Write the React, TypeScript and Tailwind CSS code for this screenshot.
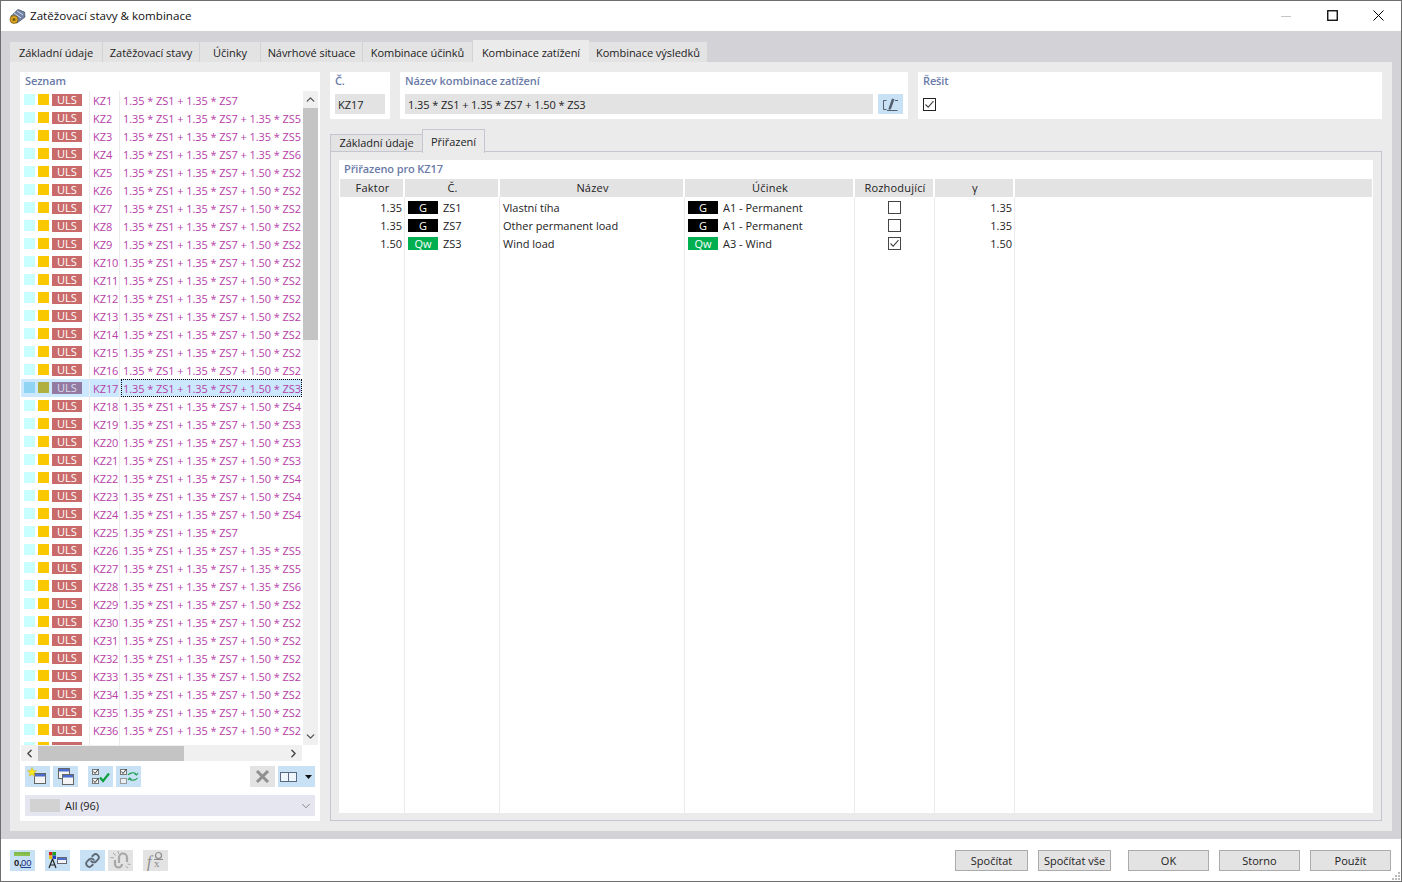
import React from 'react';
import { ChevronUp, ChevronDown, ChevronLeft, ChevronRight, Link } from 'lucide-react';

const FONT = "font-['Open_Sans','Noto_Sans',sans-serif]";

const suffixes = [
  '', ' + 1.35 * ZS5', ' + 1.35 * ZS5', ' + 1.35 * ZS6', ' + 1.50 * ZS2', ' + 1.50 * ZS2', ' + 1.50 * ZS2', ' + 1.50 * ZS2', ' + 1.50 * ZS2',
  ' + 1.50 * ZS2', ' + 1.50 * ZS2', ' + 1.50 * ZS2', ' + 1.50 * ZS2', ' + 1.50 * ZS2', ' + 1.50 * ZS2', ' + 1.50 * ZS2', ' + 1.50 * ZS3',
  ' + 1.50 * ZS4', ' + 1.50 * ZS3', ' + 1.50 * ZS3', ' + 1.50 * ZS3', ' + 1.50 * ZS4', ' + 1.50 * ZS4', ' + 1.50 * ZS4', '',
  ' + 1.35 * ZS5', ' + 1.35 * ZS5', ' + 1.35 * ZS6', ' + 1.50 * ZS2', ' + 1.50 * ZS2', ' + 1.50 * ZS2', ' + 1.50 * ZS2', ' + 1.50 * ZS2',
  ' + 1.50 * ZS2', ' + 1.50 * ZS2', ' + 1.50 * ZS2',
];

const topTabs = [
  { label: 'Základní údaje', w: 'w-[93px]' },
  { label: 'Zatěžovací stavy', w: 'w-[97px]' },
  { label: 'Účinky', w: 'w-[61px]' },
  { label: 'Návrhové situace', w: 'w-[102px]' },
  { label: 'Kombinace účinků', w: 'w-[110px]' },
  { label: 'Kombinace zatížení', w: 'w-[116px]', active: true },
  { label: 'Kombinace výsledků', w: 'w-[119px]' },
];

const rows = [
  { f: '1.35', tag: 'G', zs: 'ZS1', name: 'Vlastní tíha', eff: 'A1 - Permanent', dec: false, g: '1.35' },
  { f: '1.35', tag: 'G', zs: 'ZS7', name: 'Other permanent load', eff: 'A1 - Permanent', dec: false, g: '1.35' },
  { f: '1.50', tag: 'Qw', zs: 'ZS3', name: 'Wind load', eff: 'A3 - Wind', dec: true, g: '1.50' },
];

const cols = ['w-[65px]', 'w-[95px]', 'w-[185px]', 'w-[170px]', 'w-[80px]', 'w-[80px]'];

const Tag = ({ t }: { t: string }) => (
  <span className={`w-[30px] h-[13px] -mt-[3px] flex items-center justify-center text-[11px] leading-none text-white ${t === 'G' ? 'bg-black' : 'bg-[#00b050]'}`}>{t}</span>
);

const Box = ({ on, dark }: { on?: boolean; dark?: boolean }) => (
  <svg width="13" height="13" viewBox="0 0 13 13">
    <rect x="0.5" y="0.5" width="12" height="12" fill="#fff" stroke={dark ? '#222' : '#444'} />
    {on && <path d="M2.5 6.5 L5.2 9.2 L10.5 3.2" fill="none" stroke="#444" strokeWidth="1.1" />}
  </svg>
);

const IconBtn = ({ children, gray, className = '' }: { children?: React.ReactNode; gray?: boolean; className?: string }) => (
  <div className={`w-[25px] h-[21px] shrink-0 flex items-center justify-center ${gray ? 'bg-[#e3e3e3]' : 'bg-[#c8e1f5]'} ${className}`}>{children}</div>
);

const Btn = ({ label, w }: { label: string; w: string }) => (
  <div className={`${w} h-[21px] pt-[2px] border border-[#ababab] bg-[#e3e3e3] flex items-center justify-center text-[11px] text-[#222]`}>{label}</div>
);

const Win = ({ x, y, w = 12, h = 11 }: { x: number; y: number; w?: number; h?: number }) => (
  <g>
    <rect x={x + 0.5} y={y + 0.5} width={w} height={h} fill="#f4f4f4" stroke="#666" />
    <rect x={x + 1} y={y + 1} width={w - 1} height="2.5" fill="#4a6ccc" />
  </g>
);

const Ico = ({ children }: { children: React.ReactNode }) => (
  <svg width="25" height="21" viewBox="0 0 25 21">{children}</svg>
);

const Title = ({ children, className = '' }: { children: React.ReactNode; className?: string }) => (
  <div className={`h-[18px] flex items-center text-[11px] font-semibold tracking-[-0.12px] text-[#6a7ba8] whitespace-nowrap ${className}`}>{children}</div>
);

function ListRow({ i }: { i: number }) {
  const selected = i === 16;
  return (
    <div className={`h-[18px] flex items-start shrink-0 ${selected ? 'bg-[#cce8ff]' : ''}`}>
      <span className={`mt-[3px] ml-[3px] w-[11px] h-[11px] ${selected ? 'bg-[#90d4f4]' : 'bg-[#c8ffff]'}`} />
      <span className={`mt-[3px] ml-[3px] w-[11px] h-[11px] ${selected ? 'bg-[#b0b040]' : 'bg-[#f9c800]'}`} />
      <span className={`mt-[3px] ml-[3px] w-[30px] h-[12px] pb-[1px] flex items-center justify-center text-[11px] leading-none ${selected ? 'bg-[#927aa0] text-[#dde]' : 'bg-[#c96b6b] text-white'}`}>ULS</span>
      <span className="ml-[7px] w-[1px] h-[18px] bg-[#ebebeb]" />
      <span className="w-[29px] h-[18px] pt-[2px] pl-[3px] flex items-center text-[11px] tracking-[-0.08px] text-[#b640a8] whitespace-nowrap">KZ{i + 1}</span>
      <span className="w-[1px] h-[18px] bg-[#ebebeb]" />
      <span className={`pl-[2px] pt-[2px] ml-[1px] h-[18px] flex-1 flex items-center text-[11px] tracking-[-0.07px] text-[#b640a8] whitespace-pre ${selected ? 'outline-1 outline-dotted outline-offset-[-1px] outline-black' : ''}`}>
        {`1.35 * ZS1 + 1.35 * ZS7${suffixes[i]}`}
      </span>
    </div>
  );
}

export default function App() {
  return (
    <div className={`w-[1402px] h-[882px] bg-white border border-[#6e6e6e] flex flex-col overflow-hidden ${FONT}`}>
      {/* title bar */}
      <div className="h-[30px] shrink-0 flex items-center bg-white">
        <svg width="18" height="17" viewBox="0 0 18 17" className="ml-[7px]">
          <path d="M3 8 L10 1.5 L16.5 4 L17 9 L9 15 L4 13 Z" fill="#6f82a6" stroke="#3c4658" strokeWidth="0.7" />
          <path d="M6 5 L13 10 M9 3 L15 7 M4.5 7 L10 12" stroke="#d6dcea" strokeWidth="1" />
          <circle cx="6" cy="11.5" r="4" fill="#d9a520" stroke="#6e5210" strokeWidth="0.7" />
          <circle cx="6" cy="11.5" r="1.5" fill="#7a5a10" />
        </svg>
        <span className="ml-[4px] text-[11.6px] text-[#111]">Zatěžovací stavy &amp; kombinace</span>
        <div className="ml-auto flex items-center -mt-px">
          <div className="w-[46px] flex justify-center"><svg width="10" height="10" viewBox="0 0 10 10"><path d="M0 5.5 H10" stroke="#c4c4c4" /></svg></div>
          <div className="w-[46px] flex justify-center"><svg width="11" height="11" viewBox="0 0 11 11"><rect x="0.75" y="0.75" width="9.5" height="9.5" fill="none" stroke="#000" strokeWidth="1.3" /></svg></div>
          <div className="w-[46px] flex justify-center"><svg width="11" height="11" viewBox="0 0 11 11"><path d="M0.5 0.5 L10.5 10.5 M10.5 0.5 L0.5 10.5" stroke="#000" /></svg></div>
        </div>
      </div>

      {/* body */}
      <div className="h-[808px] shrink-0 bg-[#d2d2d7] px-[9px] pt-[9px] flex flex-col">
        <div className="h-[22px] flex items-end shrink-0">
          {topTabs.map(t => (
            <div key={t.label} className={`${t.w} flex items-center justify-center text-[11px] tracking-[-0.05px] text-[#222] whitespace-nowrap ${t.active ? 'h-[22px] pt-[4px] bg-[#ebebeb]' : 'h-[20px] pt-[2px] bg-[#e3e3e3] border-r border-[#d2d2d7]'}`}>{t.label}</div>
          ))}
        </div>
        <div className="h-[769px] bg-[#ebebeb] flex p-[10px] gap-[10px]">
          {/* left list */}
          <div className="w-[300px] h-[749px] bg-white flex flex-col shrink-0 px-[1px]">
            <Title className="pl-[4px]">Seznam</Title>
            <div className="h-[654px] flex mt-[1px] overflow-hidden shrink-0">
              <div className="w-[281px] flex flex-col overflow-hidden">
                {suffixes.map((_, i) => <ListRow key={i} i={i} />)}
                <div className="h-[18px] flex items-start shrink-0">
                  <span className="mt-[3px] ml-[3px] w-[11px] h-[11px] bg-[#c8ffff]" />
                  <span className="mt-[3px] ml-[3px] w-[11px] h-[11px] bg-[#f9c800]" />
                  <span className="mt-[3px] ml-[3px] w-[30px] h-[12px] bg-[#c96b6b]" />
                  <span className="ml-[7px] w-[1px] h-[18px] bg-[#ebebeb]" />
                  <span className="ml-[29px] w-[1px] h-[18px] bg-[#ebebeb]" />
                </div>
              </div>
              <div className="w-[15px] h-[654px] ml-[1px] bg-[#f0f0f0] flex flex-col items-center">
                <ChevronUp size={13} strokeWidth={2.5} className="text-[#555] my-[2px] shrink-0" />
                <div className="w-[15px] h-[232px] bg-[#c4c4c4]" />
                <div className="flex-1" />
                <ChevronDown size={13} strokeWidth={2.5} className="text-[#555] my-[2px] shrink-0" />
              </div>
            </div>
            <div className="h-[16px] w-[281px] bg-[#f0f0f0] flex items-center shrink-0">
              <div className="w-[17px] flex justify-center"><ChevronLeft size={13} strokeWidth={2.5} className="text-[#444]" /></div>
              <div className="w-[146px] h-[15px] bg-[#c4c4c4]" />
              <div className="ml-auto w-[17px] flex justify-center"><ChevronRight size={13} strokeWidth={2.5} className="text-[#444]" /></div>
            </div>
            <div className="h-[21px] mt-[5px] pl-[4px] flex items-center shrink-0">
              <IconBtn>
                <Ico>
                  <Win x={9} y={7} w={11} h={10} />
                  <path d="M7 1.5 L8.3 4.6 L11.5 4.8 L9 7 L9.8 10.2 L7 8.5 L4.2 10.2 L5 7 L2.5 4.8 L5.7 4.6 Z" fill="#f8e81c" stroke="#b8a010" strokeWidth="0.4" />
                </Ico>
              </IconBtn>
              <IconBtn className="ml-[3px]">
                <Ico>
                  <Win x={5} y={2} w={11} h={10} />
                  <Win x={9} y={8} w={11} h={10} />
                </Ico>
              </IconBtn>
              <IconBtn className="ml-[10px]">
                <Ico>
                  <rect x="4.5" y="3.5" width="6" height="5" fill="#f4f4f4" stroke="#777" />
                  <rect x="4.5" y="12.5" width="6" height="5" fill="#f4f4f4" stroke="#777" />
                  <path d="M5.5 5.5 L7 7.5 L10.5 3 M5.5 14.5 L7 16.5 L10.5 12" fill="none" stroke="#333" strokeWidth="0.9" />
                  <path d="M12 11.5 L15 15 L21 7.5" fill="none" stroke="#10a040" strokeWidth="2.2" />
                </Ico>
              </IconBtn>
              <IconBtn className="ml-[3px]">
                <Ico>
                  <rect x="4.5" y="3.5" width="6" height="5" fill="#f4f4f4" stroke="#777" />
                  <rect x="4.5" y="12.5" width="6" height="5" fill="#e8eef4" stroke="#999" />
                  <path d="M5.5 5.5 L7 7.5 L10.5 3" fill="none" stroke="#333" strokeWidth="0.9" />
                  <path d="M12 9 C14 6.5 18 6 20 8 M22 7 L20.5 9 L18.5 7.5 M21.5 12 C19.5 14.5 15.5 15 13.5 13 M12 14 L13.5 12 L15.5 13.5" fill="none" stroke="#20a050" strokeWidth="1.2" />
                </Ico>
              </IconBtn>
              <IconBtn gray className="ml-auto">
                <svg width="15" height="15" viewBox="0 0 15 15"><path d="M2 2 L13 13 M13 2 L2 13" stroke="#8f8f8f" strokeWidth="3" /></svg>
              </IconBtn>
              <div className="ml-[3px] mr-[4px] w-[37px] h-[21px] bg-[#c8e1f5] flex items-center">
                <span className="ml-[2px] w-[9px] h-[10px] border border-[#5a6a80] bg-[#eef6fc]" />
                <span className="w-[8px] h-[10px] border border-[#5a6a80] border-l-0 bg-[#eef6fc]" />
                <svg width="7" height="4" viewBox="0 0 7 4" className="ml-[8px]"><path d="M0 0 H7 L3.5 4 Z" fill="#111" /></svg>
              </div>
            </div>
            <div className="h-[21px] mt-[8px] ml-[4px] mr-[4px] bg-[#e6e6f0] flex items-center shrink-0">
              <span className="ml-[5px] w-[30px] h-[13px] bg-[#d2d2d2]" />
              <span className="ml-[5px] pt-[2px] text-[11px] tracking-[-0.05px] text-[#222]">All (96)</span>
              <ChevronDown size={14} strokeWidth={1} className="ml-auto mr-[2px] text-[#444]" />
            </div>
          </div>

          {/* right side */}
          <div className="flex-1 flex flex-col">
            <div className="flex h-[47px] shrink-0">
              <div className="w-[60px] bg-white px-[5px]">
                <Title>Č.</Title>
                <div className="mt-[4px] h-[20px] pt-[2px] bg-[#e3e3e3] flex items-center pl-[3px] text-[11px] text-[#222]">KZ17</div>
              </div>
              <div className="ml-[10px] w-[508px] bg-white px-[5px]">
                <Title>Název kombinace zatížení</Title>
                <div className="mt-[4px] flex">
                  <div className="w-[468px] h-[20px] pt-[2px] bg-[#e3e3e3] flex items-center pl-[3px] text-[11px] tracking-[-0.08px] text-[#222] whitespace-pre">1.35 * ZS1 + 1.35 * ZS7 + 1.50 * ZS3</div>
                  <div className="ml-[5px] w-[25px] h-[20px] bg-[#c8e1f5] flex items-center justify-center">
                    <svg width="17" height="15" viewBox="0 0 17 15">
                      <path d="M4.5 3.5 H1.5 V12.5 H4.5 M5 13.5 H15.5 M13 3.5 H16" fill="none" stroke="#55606e" strokeWidth="1" />
                      <path d="M6.5 11.5 L10 1.5 L12.5 2.3 L9 12 L7 13 Z" fill="#55606e" />
                    </svg>
                  </div>
                </div>
              </div>
              <div className="ml-[10px] flex-1 bg-white px-[5px]">
                <Title>Řešit</Title>
                <div className="mt-[4px] h-[20px] flex items-center"><Box on dark /></div>
              </div>
            </div>

            <div className="h-[23px] mt-[10px] flex items-end shrink-0">
              <div className="w-[92px] h-[18px] pb-[1px] bg-[#e3e3e3] border border-[#c6c6d0] border-b-0 border-r-0 flex items-center justify-center text-[11px] tracking-[-0.05px] text-[#222]">Základní údaje</div>
              <div className="relative z-10 w-[63px] h-[24px] -mb-px pt-[2px] bg-[#ebebeb] border border-[#c6c6d0] border-b-0 flex items-center justify-center text-[11px] tracking-[-0.05px] text-[#222]">Přiřazení</div>
            </div>
            <div className="flex-1 border border-[#c6c6d0] px-[8px] pt-[8px] pb-[7px] flex flex-col -mt-px">
              <div className="flex-1 bg-white flex flex-col">
                <Title className="pl-[5px]">Přiřazeno pro KZ17</Title>
                <div className="h-[18px] mt-[1px] mx-[1px] bg-[#e3e3e3] flex text-[11px] tracking-[0.2px] text-[#222] shrink-0">
                  {['Faktor', 'Č.', 'Název', 'Účinek', 'Rozhodující', 'γ'].map((h, i) => (
                    <div key={h} className={`${cols[i]} pl-[2px] flex items-center justify-center border-r-2 border-white`}>{h}</div>
                  ))}
                </div>
                <div className="flex-1 relative flex flex-col pt-[2px] ml-[1px]">
                  {/* column rules */}
                  <div className="absolute inset-0 flex pointer-events-none">
                    {cols.map(c => <div key={c} className={`${c} border-r border-[#ebebeb]`} />)}
                  </div>
                  {rows.map(r => (
                    <div key={r.zs} className="relative h-[18px] pt-[1px] flex items-center text-[11px] text-[#222]">
                      <div className="w-[65px] pr-[3px] text-right">{r.f}</div>
                      <div className="w-[95px] flex items-center gap-[5px] pl-[3px]"><Tag t={r.tag} />{r.zs}</div>
                      <div className="w-[185px] pl-[3px]">{r.name}</div>
                      <div className="w-[170px] flex items-center gap-[5px] pl-[3px]"><Tag t={r.tag} />{r.eff}</div>
                      <div className="w-[80px] pr-[2px] flex justify-center -mt-[2px]"><Box on={r.dec} /></div>
                      <div className="w-[80px] pr-[3px] text-right">{r.g}</div>
                    </div>
                  ))}
                </div>
              </div>
            </div>
          </div>
        </div>
      </div>

      {/* bottom bar */}
      <div className="flex-1 bg-white flex items-center relative">
        <div className="flex items-center pl-[9px]">
          <IconBtn>
            <Ico>
              <rect x="4" y="2" width="16" height="4" fill="#8cc152" />
              <path d="M6 2 V4 M9 2 V4 M12 2 V4 M15 2 V4 M18 2 V4" stroke="#5d9a35" strokeWidth="0.6" />
              <text x="4" y="15.5" fontSize="9.5" fontWeight="700" fill="#222" fontFamily="Liberation Sans">0,</text>
              <text x="11" y="15.5" fontSize="9.5" fill="#203080" fontFamily="Liberation Sans">00</text>
              <path d="M11 17.5 H21" stroke="#2040a0" />
            </Ico>
          </IconBtn>
          <IconBtn className="ml-[10px]">
            <Ico>
              <rect x="4" y="2" width="3.5" height="3.5" fill="#d02020" />
              <rect x="7.5" y="2" width="3.5" height="3.5" fill="#20a020" />
              <rect x="4" y="5.5" width="3.5" height="3.5" fill="#e8c010" />
              <rect x="7.5" y="5.5" width="3.5" height="3.5" fill="#2040c0" />
              <path d="M7.5 9 L4 18 M7.5 9 L11 18 M5 15 H10" stroke="#222" strokeWidth="1.2" fill="none" />
              <rect x="12.5" y="7.5" width="9" height="6" fill="#f4f4f4" stroke="#667" />
              <rect x="13" y="8" width="8" height="2" fill="#4a6ccc" />
            </Ico>
          </IconBtn>
          <IconBtn className="ml-[10px]"><Link size={15} strokeWidth={3} className="text-[#5f6873]" /></IconBtn>
          <IconBtn gray className="ml-[3px]">
            <Ico>
              <path d="M11 13 V7.5 A4 4 0 0 1 19 7.5 V12" fill="none" stroke="#a8a8a8" strokeWidth="2.2" />
              <path d="M7 10 V14 A3.5 3.5 0 0 0 14 14" fill="none" stroke="#a8a8a8" strokeWidth="2.2" />
              <path d="M5 3 L8 5.5 M10 1 L10.5 4 M2.5 7.5 L6 8 M20 18 L17.5 16 M22.5 14.5 L19.5 14" stroke="#a8a8a8" strokeWidth="1" />
            </Ico>
          </IconBtn>
          <IconBtn gray className="ml-[10px]">
            <Ico>
              <text x="4" y="17" fontSize="16" fontStyle="italic" fill="#8c8c8c" fontFamily="Liberation Serif">f</text>
              <text x="11" y="17" fontSize="11" fill="#8c8c8c" fontFamily="Liberation Serif">x</text>
              <circle cx="15.5" cy="5.5" r="3" fill="none" stroke="#8c8c8c" strokeWidth="1.2" />
              <path d="M11 9.5 H20" stroke="#8c8c8c" />
            </Ico>
          </IconBtn>
        </div>
        <div className="ml-auto flex items-center pr-[10px]">
          <Btn label="Spočítat" w="w-[73px]" />
          <div className="ml-[10px]"><Btn label="Spočítat vše" w="w-[73px]" /></div>
          <div className="ml-[17px]"><Btn label="OK" w="w-[81px]" /></div>
          <div className="ml-[10px]"><Btn label="Storno" w="w-[81px]" /></div>
          <div className="ml-[10px]"><Btn label="Použít" w="w-[81px]" /></div>
        </div>
        <svg width="10" height="10" viewBox="0 0 10 10" className="absolute right-0 bottom-0">
          <path d="M7 1h2v2H7zM4 4h2v2H4zM7 4h2v2H7zM1 7h2v2H1zM4 7h2v2H4zM7 7h2v2H7z" fill="#bbb" />
        </svg>
      </div>
    </div>
  );
}
